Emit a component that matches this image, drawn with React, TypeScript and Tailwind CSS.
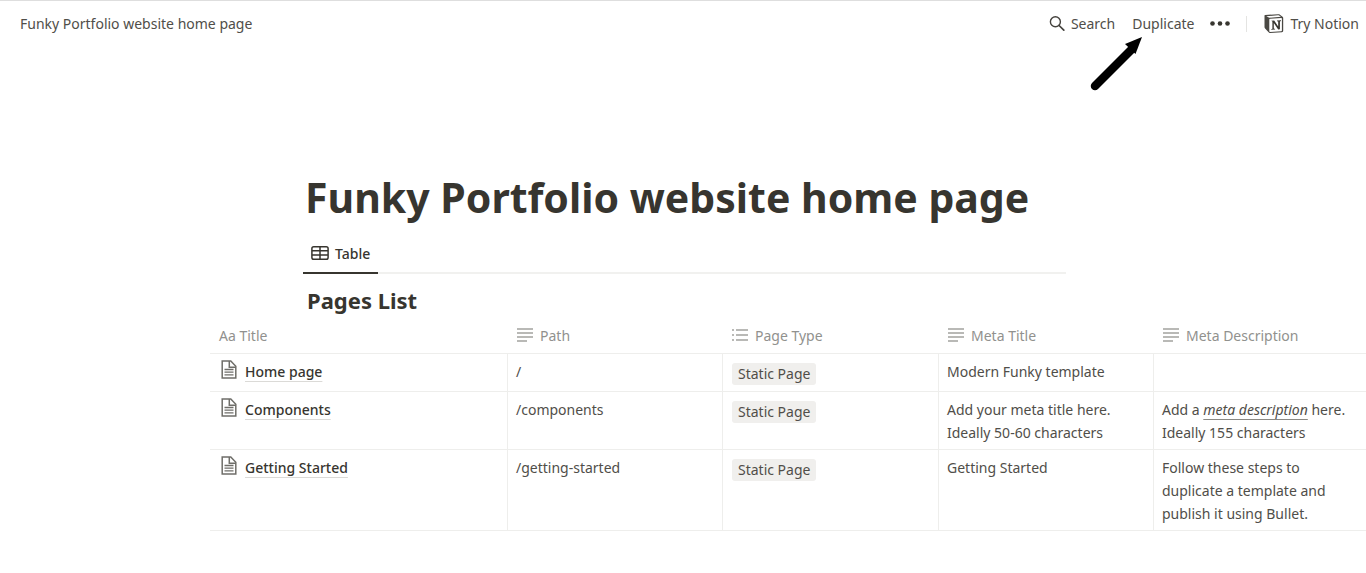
import { clsx } from "clsx";
import type { ReactNode } from "react";

type Row = {
  title: string;
  path: string;
  type: string;
  metaTitle: ReactNode;
  metaDescription?: ReactNode;
};

const ROWS: Row[] = [
  {
    title: "Home page",
    path: "/",
    type: "Static Page",
    metaTitle: "Modern Funky template",
  },
  {
    title: "Components",
    path: "/components",
    type: "Static Page",
    metaTitle: (
      <>
        Add your meta title here.
        <br />
        Ideally 50-60 characters
      </>
    ),
    metaDescription: (
      <>
        Add a{" "}
        <em className="underline decoration-[#8a8984] decoration-1 underline-offset-4 [text-decoration-skip-ink:none]">
          meta description
        </em>{" "}
        here.
        <br />
        Ideally 155 characters
      </>
    ),
  },
  {
    title: "Getting Started",
    path: "/getting-started",
    type: "Static Page",
    metaTitle: "Getting Started",
    metaDescription: (
      <>
        Follow these steps to
        <br />
        duplicate a template and
        <br />
        publish it using Bullet.
      </>
    ),
  },
];

function SearchIcon() {
  return (
    <svg className="h-4 w-4" viewBox="0 0 16 16" fill="none" stroke="#45433e" strokeWidth="1.4">
      <circle cx="6.4" cy="5.7" r="5" />
      <path d="M10.1 9.500l4.700 4.700" strokeWidth="1.700" strokeLinecap="round" />
    </svg>
  );
}

function DotsIcon() {
  return (
    <svg className="h-5 w-5" viewBox="0 0 20 20" fill="#37352f">
      <circle cx="2.5" cy="9.500" r="2.3" />
      <circle cx="10" cy="9.500" r="2.3" />
      <circle cx="17.5" cy="9.500" r="2.3" />
    </svg>
  );
}

function NotionLogo() {
  return (
    <svg className="h-5 w-5" viewBox="0 0 20 20">
      <path
        d="M1 1.100L14 .2c.9-.1 1.300 0 1.900.5l2.700 2c.4.3.6.6.6 1.200v12.900c0 .9-.4 1.300-1.300 1.400L6.200 19c-.8 0-1.200-.1-1.600-.7L1.100 14.500c-.4-.5-.6-.9-.6-1.500V1.800c0-.4.1-.7.5-.7z"
        fill="#4a4843"
      />
      <path d="M2.300 2.200L13.800 1.200c.6 0 .9 0 1.300.3l1.900 1.300L5.500 3.700c-.6 0-.9-.1-1.300-.4z" fill="#fff" />
      <path d="M5.300 5.600c0-.5.2-.7.7-.8l11.300-.7c.4 0 .6.2.6.6v11.700c0 .5-.2.8-.7.8L6.100 17.900c-.5 0-.8-.2-.8-.7z" fill="#fff" />
      <path
        d="M7.200 6.700l3-.2 4 6.100V7.500l-1.200-.3V6.500l4-.2v.6l-1.100.5v7.900l-1.700.3-4.400-6.700v5.700l1.300.4v.6l-3.900.2v-.6l1.200-.5V7.600z"
        fill="#37352f"
      />
    </svg>
  );
}

function TableIcon() {
  return (
    <svg className="h-[14px] w-[18px]" viewBox="0 0 18 14" fill="none" stroke="#37352f" strokeWidth="1.500">
      <rect x=".9" y=".8" width="16.200" height="12.400" rx="1.800" />
      <path d="M1 4.800h16M1 9h16M9 1v12" />
    </svg>
  );
}

function TextIcon() {
  return (
    <svg className="h-[14px] w-4" viewBox="0 0 16 14" stroke="#a3a29e" strokeWidth="1.300">
      <path d="M0 1h16M0 5h16M0 9h16M0 13h10" />
    </svg>
  );
}

function ListIcon() {
  return (
    <svg className="h-[14px] w-4" viewBox="0 0 16 14" stroke="#a3a29e" strokeWidth="1.400">
      <path d="M4 2h12M4 7h12M4 12h12M0 2h2M0 7h2M0 12h2" />
    </svg>
  );
}

function PageIcon() {
  return (
    <svg className="h-[19px] w-4" viewBox="0 0 16 19" fill="none" stroke="#6f6e69" strokeWidth="1.500">
      <path d="M1.200 1h8.600l5 5.200v11.800H1.200z" />
      <path d="M8.300 1v6.200h6.500" />
      <path d="M3.500 9.500h9M3.500 12.200h9M3.500 14.900h9" strokeWidth="1.300" />
    </svg>
  );
}

function PointerArrow() {
  return (
    <svg
      className="pointer-events-none absolute top-[25px] -left-[42px] h-[55px] w-[54px]"
      viewBox="0 0 54 55"
      aria-hidden="true"
    >
      <path d="M5 49L41 13" stroke="#000" strokeWidth="8.500" strokeLinecap="round" />
      <path d="M52 0L35 7l10.500 10z" fill="#000" />
    </svg>
  );
}

function TopBar() {
  return (
    <header className="flex h-[46px] items-center justify-between border-t border-[#dedede] pr-[7px] pl-5">
      <a href="#home">Funky Portfolio website home page</a>
      <nav className="flex items-center">
        <button className="flex items-center gap-[6px]">
          <SearchIcon />
          Search
        </button>
        <div className="relative ml-[17px]">
          <button>Duplicate</button>
          <PointerArrow />
        </div>
        <button className="ml-4" aria-label="More">
          <DotsIcon />
        </button>
        <div className="mr-[17px] ml-4 h-4 w-px bg-[#e4e4e2]" />
        <a href="#notion" className="flex items-center gap-[6px]">
          <NotionLogo />
          Try Notion
        </a>
      </nav>
    </header>
  );
}

function HeadCell({ icon, label }: { icon?: ReactNode; label: string }) {
  return (
    <th
      className={clsx(
        "h-9 border-b border-[#eeeeec] pb-px text-left font-normal",
        icon ? "pl-[10px]" : "pl-[9px]",
      )}
    >
      <div className="flex items-center gap-[7px]">
        {icon}
        {label}
      </div>
    </th>
  );
}

function Cell({ children, className }: { children?: ReactNode; className?: string }) {
  return (
    <td className={clsx("border-b border-[#eeeeec] pt-[6px] align-top", className ?? "border-l pb-[5px] pl-2")}>
      {children}
    </td>
  );
}

function PagesTable() {
  return (
    <div className="overflow-hidden pl-[210px]">
      <table className="w-full table-fixed border-separate border-spacing-0">
        <colgroup>
          <col className="w-[297px]" />
          <col className="w-[215px]" />
          <col className="w-[216px]" />
          <col className="w-[215px]" />
          <col />
        </colgroup>
        <thead className="text-[#91918e]">
          <tr>
            <HeadCell label="Aa Title" />
            <HeadCell icon={<TextIcon />} label="Path" />
            <HeadCell icon={<ListIcon />} label="Page Type" />
            <HeadCell icon={<TextIcon />} label="Meta Title" />
            <HeadCell icon={<TextIcon />} label="Meta Description" />
          </tr>
        </thead>
        <tbody>
          {ROWS.map((row) => (
            <tr key={row.title}>
              <Cell className="pb-[5px] pl-[11px]">
                <div className="flex items-start gap-2">
                  <PageIcon />
                  <a
                    href="#page"
                    className="font-medium text-[#37352f] underline decoration-[#dbdad7] decoration-1 underline-offset-4 [text-decoration-skip-ink:none]"
                  >
                    {row.title}
                  </a>
                </div>
              </Cell>
              <Cell>{row.path}</Cell>
              <Cell className="border-l pb-[6px] pl-[9px]">
                <span className="mt-[3px] block w-fit rounded-[3px] bg-[#f0efed] px-[6px] leading-[22px]">
                  {row.type}
                </span>
              </Cell>
              <Cell>{row.metaTitle}</Cell>
              <Cell>{row.metaDescription}</Cell>
            </tr>
          ))}
        </tbody>
      </table>
    </div>
  );
}

export default function App() {
  return (
    <div className="min-h-screen bg-white font-['Noto_Sans','Open_Sans',sans-serif] text-[14px] leading-[23px] text-[#504e49]">
      <TopBar />
      <main className="pt-[121px]">
        <div className="pr-[300px] pl-[303px] text-[#37352f]">
          <h1 className="pl-[2px] text-[41px] leading-[60px] font-bold whitespace-nowrap">
            Funky Portfolio website home page
          </h1>
          <div className="mt-[7px] flex border-b-2 border-[#f1f1ef]">
            <button className="-mb-[2px] flex h-10 items-center gap-[6px] border-b-2 border-[#37352f] px-2 font-medium">
              <TableIcon />
              Table
            </button>
          </div>
          <h2 className="mt-[9px] mb-px pl-1 text-[22px] leading-[34px] font-bold">Pages List</h2>
        </div>
        <PagesTable />
      </main>
    </div>
  );
}
